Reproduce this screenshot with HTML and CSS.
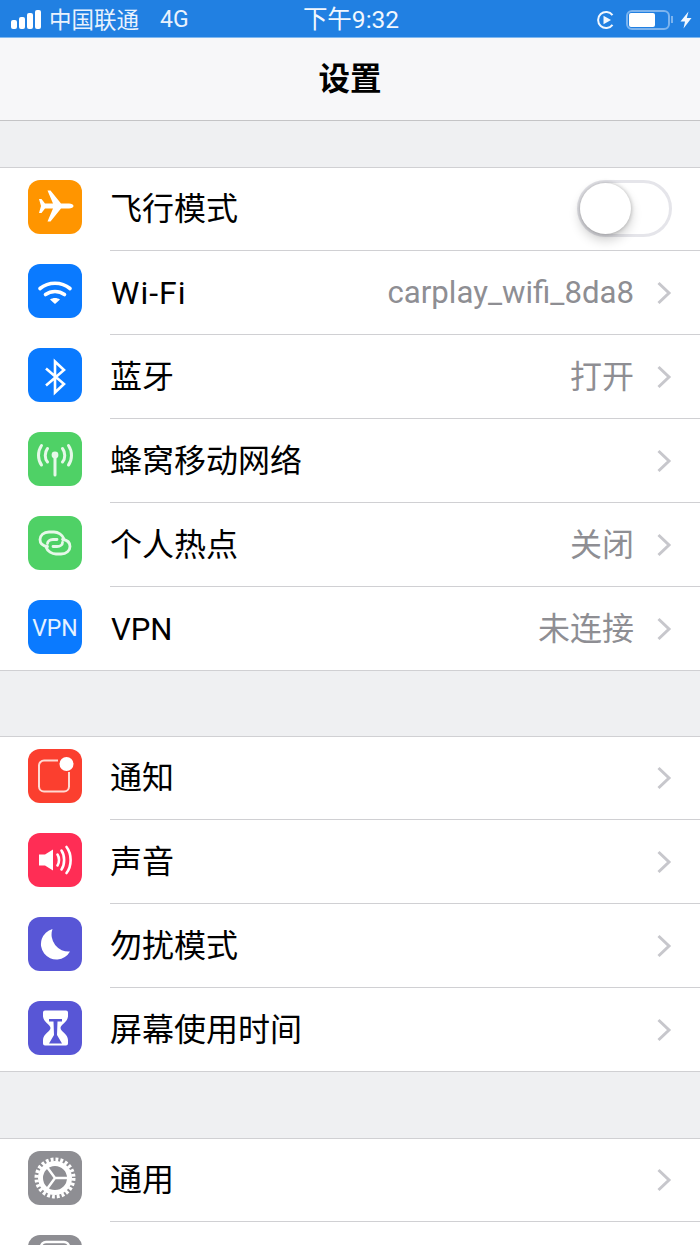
FILE: index.html
```html
<!DOCTYPE html>
<html lang="zh-CN">
<head>
    <meta charset="UTF-8">
    <title>设置</title>
    <link rel="stylesheet" href="styles.css">
</head>
<body>
    <div class="statusbar">
        <div class="status-left">
            <div class="signal"><i class="s1"></i><i class="s2"></i><i class="s3"></i><i class="s4"></i></div>
            <span class="carrier">中国联通</span>
            <span class="network">4G</span>
        </div>
        <div class="status-time">下午9:32</div>
        <div class="status-right">
            <svg class="lock-icon" width="20" height="20" viewBox="0 0 20 20">
                <path d="M16.5 5.2A8 8 0 1 0 16.5 14.8" fill="none" stroke="#f2f7fe" stroke-width="2"/>
                <path d="M7.5 5.8L15 10L7.5 14.2Z" fill="#f2f7fe"/>
            </svg>
            <div class="battery"><div class="battery-fill"></div></div>
            <div class="battery-tip"></div>
            <svg class="bolt" width="12" height="20" viewBox="0 0 12 20">
                <path d="M8.500 1.500L0.500 11.500H5L3.500 18.500L11.500 8H6.800Z" fill="#f2f7fe"/>
            </svg>
        </div>
    </div>

    <div class="navbar">设置</div>

    <div class="group group-first">
        <div class="row">
            <div class="icon orange">
                <svg width="54" height="54" viewBox="0 0 54 54">
                    <path d="M45.500 26C45.500 24.500 43.500 23.500 41 23.500H33L22.500 10.500H19.500L25 23.500H17L13.500 19H11L13 26L11 33H13.500L17 28.500H25L19.500 41.500H22.500L33 28.500H41C43.500 28.500 45.500 27.500 45.500 26Z" fill="#fff"/>
                </svg>
            </div>
            <div class="row-body">
                <span class="label cjk">飞行模式</span>
                <div class="toggle"><div class="thumb"></div></div>
            </div>
        </div>
        <div class="row">
            <div class="icon blue">
                <svg width="54" height="54" viewBox="0 0 54 54">
                    <g fill="none" stroke="#fff" stroke-width="3.600" stroke-linecap="round">
                        <path d="M12 24.500C20.500 17.500 33.500 17.500 42 24.500"/>
                        <path d="M17.500 30.500C23 26.500 31 26.500 36.500 30.500"/>
                    </g>
                    <path d="M22 35.500C25 33.500 29 33.500 32 35.500L27 40Z" fill="#fff"/>
                </svg>
            </div>
            <div class="row-body">
                <span class="label latin wifi">Wi-Fi</span>
                <span class="value">carplay_wifi_8da8</span>
                <svg class="chevron" width="16" height="24" viewBox="0 0 16 24"><path d="M2.500 2L13 12L2.500 22"/></svg>
            </div>
        </div>
        <div class="row">
            <div class="icon blue">
                <svg width="54" height="54" viewBox="0 0 54 54">
                    <path d="M18 20.500L36 36L27 44.500V13.500L36 22L18 37.500" fill="none" stroke="#fff" stroke-width="2.600"/>
                </svg>
            </div>
            <div class="row-body">
                <span class="label cjk">蓝牙</span>
                <span class="value cjk">打开</span>
                <svg class="chevron" width="16" height="24" viewBox="0 0 16 24"><path d="M2.500 2L13 12L2.500 22"/></svg>
            </div>
        </div>
        <div class="row">
            <div class="icon green">
                <svg width="54" height="54" viewBox="0 0 54 54">
                    <g fill="none" stroke="#e6f8e9" stroke-width="3" stroke-linecap="round">
                        <path d="M19.500 16.500C16.500 20.500 16.500 26.500 19.500 30"/>
                        <path d="M34.500 16.500C37.500 20.500 37.500 26.500 34.500 30"/>
                        <path d="M13.500 13.500C9.500 19.500 9.500 27.500 13.500 33"/>
                        <path d="M40.500 13.500C44.500 19.500 44.500 27.500 40.500 33"/>
                        <path d="M27 24V43"/>
                    </g>
                    <circle cx="27" cy="23" r="3.400" fill="#e6f8e9"/>
                </svg>
            </div>
            <div class="row-body">
                <span class="label cjk">蜂窝移动网络</span>
                <svg class="chevron" width="16" height="24" viewBox="0 0 16 24"><path d="M2.500 2L13 12L2.500 22"/></svg>
            </div>
        </div>
        <div class="row">
            <div class="icon green">
                <svg width="54" height="54" viewBox="0 0 54 54">
                    <g fill="none" stroke="#e6f8e9" stroke-width="2.800" stroke-linecap="round">
                        <path d="M36 23C34.500 18.500 30 16 26 16H21C15.500 16 12 19.500 12 23.500C12 27.500 15 30 19.500 30.500"/>
                        <path d="M18 31C19.500 35.500 24 38 28 38H33C38.500 38 42 34.500 42 30.500C42 26.500 39 24 34.500 23.500"/>
                        <path d="M29 23.500H25C21.500 23.500 19.500 25.500 19.500 27.500"/>
                        <path d="M25 30.500H29C32.500 30.500 34.500 28.500 34.500 26.500"/>
                    </g>
                </svg>
            </div>
            <div class="row-body">
                <span class="label cjk">个人热点</span>
                <span class="value cjk">关闭</span>
                <svg class="chevron" width="16" height="24" viewBox="0 0 16 24"><path d="M2.500 2L13 12L2.500 22"/></svg>
            </div>
        </div>
        <div class="row">
            <div class="icon blue"><span class="vpn-text">VPN</span></div>
            <div class="row-body">
                <span class="label latin">VPN</span>
                <span class="value cjk">未连接</span>
                <svg class="chevron" width="16" height="24" viewBox="0 0 16 24"><path d="M2.500 2L13 12L2.500 22"/></svg>
            </div>
        </div>
    </div>

    <div class="group">
        <div class="row">
            <div class="icon red">
                <svg width="54" height="54" viewBox="0 0 54 54">
                    <path d="M30 11.500H16A5 5 0 0 0 11 16.500V37.500A5 5 0 0 0 16 42.500H36A5 5 0 0 0 41 37.500V23" fill="none" stroke="#ffd9d2" stroke-width="2"/>
                    <circle cx="38.500" cy="15" r="7" fill="#fff"/>
                </svg>
            </div>
            <div class="row-body">
                <span class="label cjk">通知</span>
                <svg class="chevron" width="16" height="24" viewBox="0 0 16 24"><path d="M2.500 2L13 12L2.500 22"/></svg>
            </div>
        </div>
        <div class="row">
            <div class="icon pink">
                <svg width="54" height="54" viewBox="0 0 54 54">
                    <path d="M11 21.500H17L25 16.500V37.500L17 32.500H11Z" fill="#fff"/>
                    <g fill="none" stroke="#fff" stroke-width="2.600" stroke-linecap="round">
                        <path d="M29.500 21.500C31.500 24.500 31.500 29.500 29.500 32.500"/>
                        <path d="M33.500 17.500C37 22.500 37 31.500 33.500 36.500"/>
                        <path d="M38.500 14C44 21 44 33 38.500 40"/>
                    </g>
                </svg>
            </div>
            <div class="row-body">
                <span class="label cjk">声音</span>
                <svg class="chevron" width="16" height="24" viewBox="0 0 16 24"><path d="M2.500 2L13 12L2.500 22"/></svg>
            </div>
        </div>
        <div class="row">
            <div class="icon purple">
                <svg width="54" height="54" viewBox="0 0 54 54">
                    <path d="M24.500 12A15.500 15.500 0 1 0 42 34.500A17 17 0 0 1 24.500 12Z" fill="#fff"/>
                </svg>
            </div>
            <div class="row-body">
                <span class="label cjk">勿扰模式</span>
                <svg class="chevron" width="16" height="24" viewBox="0 0 16 24"><path d="M2.500 2L13 12L2.500 22"/></svg>
            </div>
        </div>
        <div class="row">
            <div class="icon purple">
                <svg width="54" height="54" viewBox="0 0 54 54">
                    <path d="M17 9.500H38A2 2 0 0 1 40 11.500V15C40 21 32.500 23.500 32.500 27C32.500 30.500 40 33 40 39V42.500A2 2 0 0 1 38 44.500H17A2 2 0 0 1 15 42.500V39C15 33 22.500 30.500 22.500 27C22.500 23.500 15 21 15 15V11.500A2 2 0 0 1 17 9.500Z" fill="#fff"/>
                    <path d="M21 18H34V20.500H29.500L29 34L34 42.500H21L26 34L25.500 20.500H21Z" fill="#5856d6"/>
                </svg>
            </div>
            <div class="row-body">
                <span class="label cjk">屏幕使用时间</span>
                <svg class="chevron" width="16" height="24" viewBox="0 0 16 24"><path d="M2.500 2L13 12L2.500 22"/></svg>
            </div>
        </div>
    </div>

    <div class="group group-last">
        <div class="row">
            <div class="icon gray">
                <svg width="54" height="54" viewBox="0 0 54 54">
                    <g fill="none" stroke="#fff">
                        <circle cx="27" cy="27" r="18.500" stroke-width="4" stroke-dasharray="2.840 2.000"/>
                        <circle cx="27" cy="27" r="14.500" stroke-width="5"/>
                        <path d="M27 27L19 16M27 27L41 27M27 27L19 38" stroke-width="2.400"/>
                    </g>
                </svg>
            </div>
            <div class="row-body">
                <span class="label cjk">通用</span>
                <svg class="chevron" width="16" height="24" viewBox="0 0 16 24"><path d="M2.500 2L13 12L2.500 22"/></svg>
            </div>
        </div>
        <div class="row">
            <div class="icon gray">
                <svg width="54" height="54" viewBox="0 0 54 54">
                    <rect x="13" y="7" width="28" height="22" rx="5" fill="none" stroke="#fff" stroke-width="2.500"/>
                </svg>
            </div>
            <div class="row-body"></div>
        </div>
    </div>
</body>
</html>
```

FILE: styles.css
```css
html, body {
    margin: 0;
    padding: 0;
}

body {
    width: 700px;
    height: 1245px;
    overflow: hidden;
    background-color: #eff0f2;
    font-family: Roboto, "Noto Sans CJK SC", sans-serif;
    color: #000;
}

.statusbar {
    height: 37px;
    display: grid;
    grid-template-columns: 1fr auto 1fr;
    align-items: center;
    background-color: #2180e2;
    color: #e9f2fd;
    font-size: 22.500px;
}

.status-left {
    display: flex;
    align-items: center;
    padding-left: 11px;
}

.signal {
    display: flex;
    align-items: flex-end;
    gap: 2px;
    height: 19px;
    margin-right: 8px;
}

.signal i {
    width: 6px;
    border-radius: 2px;
    background-color: #fff;
}

.s1 { height: 9px; }
.s2 { height: 12px; }
.s3 { height: 16px; }
.s4 { height: 19px; }

.carrier {
    padding-bottom: 4px;
}

.network {
    margin-left: 21px;
    font-size: 23px;
}

.status-time {
    padding-bottom: 4px;
    padding-left: 2px;
    font-size: 24.500px;
    color: #f2f7fe;
}

.status-right {
    display: flex;
    align-items: center;
    justify-content: flex-end;
    padding-right: 8px;
}

.lock-icon {
    margin-right: 10px;
}

.battery {
    width: 44px;
    height: 20px;
    box-sizing: border-box;
    padding: 1px;
    border: 2px solid #7db4ee;
    border-radius: 6px;
}

.battery-fill {
    width: 26px;
    height: 100%;
    border-radius: 2px;
    background-color: #fff;
}

.battery-tip {
    width: 2px;
    height: 7px;
    margin-left: 1px;
    background-color: #7db4ee;
}

.bolt {
    margin-left: 7px;
}

.navbar {
    box-sizing: border-box;
    height: 84px;
    padding-bottom: 6px;
    display: flex;
    align-items: center;
    justify-content: center;
    border-top: 1px solid #7fb8f0;
    border-bottom: 1px solid #c4c4c6;
    background-color: #f7f7f9;
    font-size: 31.500px;
    font-weight: 700;
}

.group {
    margin-top: 65px;
    background-color: #fff;
    box-shadow: inset 0 1px #d0d0d3, inset 0 -1px #d0d0d3;
}

.group-first {
    margin-top: 46px;
}

.group-last {
    margin-top: 66px;
}

.row {
    height: 84px;
    display: flex;
    align-items: stretch;
}

.icon {
    flex: none;
    width: 54px;
    height: 54px;
    margin: 13px 28px 0 28px;
    border-radius: 12px;
    display: flex;
    align-items: center;
    justify-content: center;
}

.orange { background-color: #ff9500; }
.blue { background-color: #0a7aff; }
.green { background-color: #4fd166; }
.red { background-color: #fb3f2f; }
.pink { background-color: #ff2d55; }
.purple { background-color: #5856d6; }
.gray { background-color: #8e8e93; }

.vpn-text {
    padding-top: 2px;
    color: #e6f2ff;
    font-size: 23px;
}

.row-body {
    flex: 1;
    display: flex;
    align-items: center;
    gap: 22px;
    padding-right: 28px;
    border-bottom: 1px solid #d0d0d3;
}

.row:last-child .row-body {
    border-bottom: none;
}

.label {
    flex: 1;
    font-size: 32px;
}

.value {
    color: #8e8e93;
    font-size: 31.200px;
}

.value.cjk {
    font-size: 32px;
}

.cjk {
    padding-bottom: 6px;
}

.latin {
    padding-left: 1px;
    font-size: 31px;
}

.wifi {
    font-size: 32px;
    letter-spacing: 1px;
}

.chevron {
    flex: none;
    fill: none;
    stroke: #c7c7cc;
    stroke-width: 3;
}

.toggle {
    width: 95px;
    height: 57px;
    box-sizing: border-box;
    border: 3px solid #e5e5ea;
    border-radius: 29px;
}

.thumb {
    width: 51px;
    height: 51px;
    border-radius: 50%;
    background-color: #fff;
    box-shadow: 0 6px 12px rgba(0, 0, 0, 0.2), 0 0 4px rgba(0, 0, 0, 0.25);
}
```
